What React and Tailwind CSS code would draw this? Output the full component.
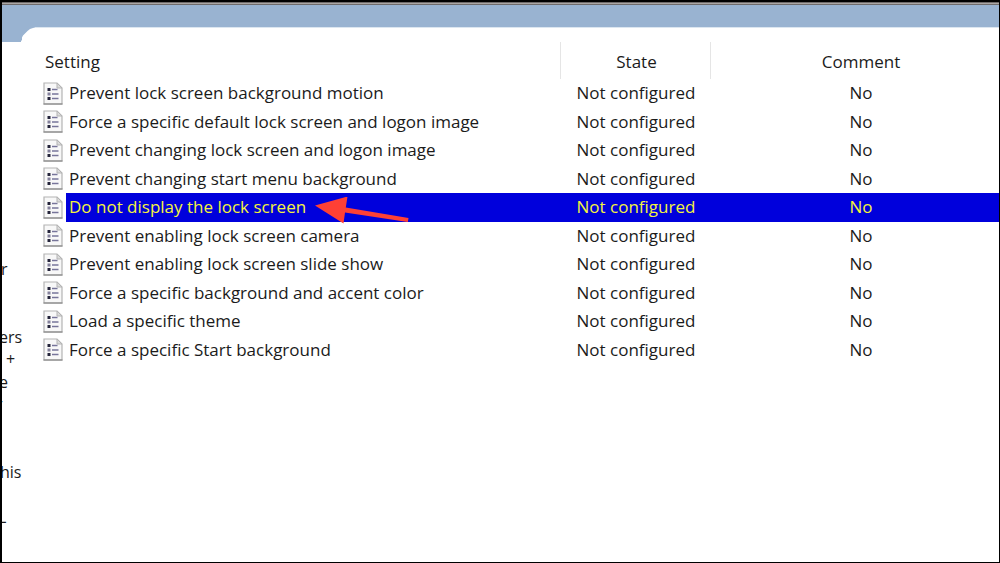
const settings = [
  'Prevent lock screen background motion',
  'Force a specific default lock screen and logon image',
  'Prevent changing lock screen and logon image',
  'Prevent changing start menu background',
  'Do not display the lock screen',
  'Prevent enabling lock screen camera',
  'Prevent enabling lock screen slide show',
  'Force a specific background and accent color',
  'Load a specific theme',
  'Force a specific Start background',
];

const selectedIndex = 4;

function PolicyIcon() {
  return (
    <svg className="block h-[23px] w-5 shrink-0" viewBox="0 0 20 23" aria-hidden="true">
      <path d="M1 1H14L19 6V22H1Z" fill="#f8f8f8" stroke="#b4b4b4" strokeWidth="1.200" />
      <path d="M0.5 22H19.500" stroke="#8c8c8c" strokeWidth="1.300" />
      <path d="M14 1V6H19Z" fill="#dcdcdc" stroke="#b4b4b4" />
      <path d="M4.5 6h3v3h-3zM4.5 15h3v3h-3z" fill="#24243a" />
      <path d="M4.5 10.5h3v3h-3z" fill="#85829c" />
      <path d="M9 7.500H14.500M9 12H15.500M9 16.500H15.500" stroke="#77759a" strokeWidth="1.300" />
    </svg>
  );
}

function Arrow() {
  return (
    <svg
      className="pointer-events-none absolute top-1 left-[249px] h-[27px] w-[94px]"
      viewBox="0 0 94 27"
      aria-hidden="true"
    >
      <path d="M0 8.500L32.500 -0.500L30.800 10.500L93.500 21L92.800 25L30 15.500L28.500 26.500Z" fill="#ff4035" />
    </svg>
  );
}

function Description() {
  return (
    <aside className="overflow-hidden pt-[216px]">
      <div className="grid h-[270px] grid-rows-12 items-center text-base leading-5 whitespace-nowrap">
        <span className="-ml-px">r</span>
        <span className="row-start-4 -ml-[3px]">ers</span>
        <span className="row-start-5 ml-1">+</span>
        <span className="row-start-6 -ml-[3px]">e</span>
        <span className="row-start-7 -ml-1.5">r</span>
        <span className="row-start-10 -ml-0.5">his</span>
        <span className="row-start-12 -ml-1">L</span>
      </div>
    </aside>
  );
}

export default function App() {
  return (
    <div className="flex min-h-screen flex-col border-t-2 border-r border-b border-l-2 border-black bg-white font-['Open_Sans','Noto_Sans',sans-serif] text-[#1b1b1b]">
      <div className="h-[3px] border-y border-[#6f6b6b] bg-[#aaa6a4]" />
      <div className="h-[22px] bg-[#99b3d1]" />
      <div className="flex flex-1 bg-[linear-gradient(#99b3d1_15px,#ffffff_15px)]">
        <div className="w-[19px] shrink-0 pt-[15px]">
          <div className="w-[21px]">
            <Description />
          </div>
        </div>
        <main className="min-w-0 flex-1">
          <div className="flex h-[15px]">
            <svg className="block h-[15px] w-[14px] shrink-0" viewBox="0 0 14 15" aria-hidden="true">
              <path d="M0 15V14L1 13V10.500L2 8.500L6.500 4L9 2L12 1L14 0.500V15Z" fill="#ffffff" />
            </svg>
            <div className="flex-1 border-t border-[#dce6f0] bg-white" />
          </div>
          <table className="h-[322px] w-full table-fixed border-separate border-spacing-0 text-[17px] leading-6">
            <colgroup>
              <col className="w-[45px]" />
              <col className="w-[495px]" />
              <col className="w-[150px]" />
              <col />
            </colgroup>
            <thead>
              <tr className="h-[37px] align-middle">
                <th scope="col" colSpan={2} className="border-r border-[#e5e5e5] pt-0.5 pl-6 text-left font-normal">Setting</th>
                <th scope="col" className="border-r border-[#e5e5e5] pt-0.5 pl-0.5 text-center font-normal">State</th>
                <th scope="col" className="pt-0.5 pl-3 text-center font-normal">Comment</th>
              </tr>
            </thead>
            <tbody>
              {settings.map((name, index) => (
                <tr key={name} className={index === selectedIndex ? 'text-[#f4f43c]' : ''}>
                  <td className="p-0 pl-[22px]">
                    <PolicyIcon />
                  </td>
                  <td className={index === selectedIndex ? 'relative bg-[#0000dc] p-0 pl-[3px]' : 'p-0 pl-[3px]'}>
                    {name}
                    {index === selectedIndex && <Arrow />}
                  </td>
                  <td className={index === selectedIndex ? 'bg-[#0000dc] p-0 text-center' : 'p-0 text-center'}>
                    Not configured
                  </td>
                  <td className={index === selectedIndex ? 'bg-[#0000dc] p-0 pl-3 text-center' : 'p-0 pl-3 text-center'}>
                    No
                  </td>
                </tr>
              ))}
            </tbody>
          </table>
        </main>
      </div>
    </div>
  );
}
